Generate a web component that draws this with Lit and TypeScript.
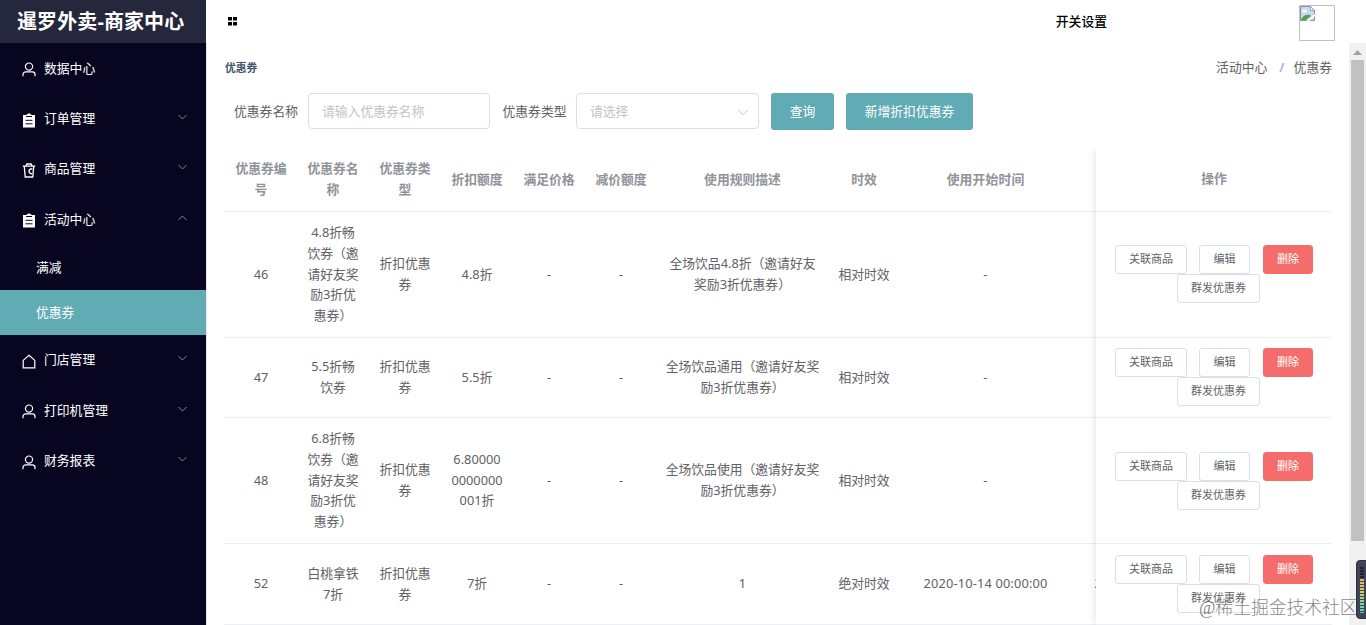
import { LitElement, html, css, svg, nothing } from "lit";
import { customElement } from "lit/decorators.js";
import { classMap } from "lit/directives/class-map.js";

const ICONS: Record<string, unknown> = {
  user: svg`<g fill="none" stroke="#fff" stroke-width="1.2"><circle cx="7" cy="4.6" r="3.6"/><path d="M1 14.2v-1.700a2.700 2.700 0 0 1 2.700-2.700h6.600a2.700 2.700 0 0 1 2.700 2.700v1.700"/></g>`,
  order: svg`<path fill="#fff" d="M1 2h3.600V1.200h1.200V.4h2.400v.8h1.200V2H13v12.400H1z"/><path stroke="#070520" stroke-width="1" d="M4 3.500h6M3.500 7.300h7M3.500 10.800h7"/>`,
  goods: svg`<g fill="none" stroke="#fff" stroke-width="1.3"><path d="M.8 3.100h12.400M4 3 4.800 1h4.400l.9 2M2.300 3.400l.9 10.600h7.600l.9-10.600"/><path d="M10.300 5.600C8 5.800 7 7 7 8.300s1 2.400 3 2.600"/></g>`,
  home: svg`<path fill="none" stroke="#fff" stroke-width="1.2" d="M7 1.200 12.800 6.400v7.500H1.200V6.400z"/>`,
};

interface Item { label: string; icon: string; arrow?: "down" | "up"; children?: { label: string; active?: boolean }[]; }

const MENU: Item[] = [
  { label: "数据中心", icon: "user" },
  { label: "订单管理", icon: "order", arrow: "down" },
  { label: "商品管理", icon: "goods", arrow: "down" },
  { label: "活动中心", icon: "order", arrow: "up", children: [{ label: "满减" }, { label: "优惠券", active: true }] },
  { label: "门店管理", icon: "home", arrow: "down" },
  { label: "打印机管理", icon: "user", arrow: "down" },
  { label: "财务报表", icon: "user", arrow: "down" },
];

const HEAD = [["优惠券编", "号"], ["优惠券名", "称"], ["优惠券类", "型"], ["折扣额度"], ["满足价格"], ["减价额度"], ["使用规则描述"], ["时效"], ["使用开始时间"], [""]];

const NONE = ["-"];
const KIND = ["折扣优惠", "券"];
const ROWS = [
  { size: "tall", cells: [["46"], ["4.8折畅", "饮券（邀", "请好友奖", "励3折优", "惠券）"], KIND, ["4.8折"], NONE, NONE, ["全场饮品4.8折（邀请好友", "奖励3折优惠券）"], ["相对时效"], NONE, []] },
  { size: "short", cells: [["47"], ["5.5折畅", "饮券"], KIND, ["5.5折"], NONE, NONE, ["全场饮品通用（邀请好友奖", "励3折优惠券）"], ["相对时效"], NONE, []] },
  { size: "tall", cells: [["48"], ["6.8折畅", "饮券（邀", "请好友奖", "励3折优", "惠券）"], KIND, ["6.80000", "0000000", "001折"], NONE, NONE, ["全场饮品使用（邀请好友奖", "励3折优惠券）"], ["相对时效"], NONE, []] },
  { size: "last", cells: [["52"], ["白桃拿铁", "7折"], KIND, ["7折"], NONE, NONE, ["1"], ["绝对时效"], ["2020-10-14 00:00:00"], ["2020-10-31 00:00:00"]] },
];

@customElement("side-menu")
class SideMenu extends LitElement {
  static styles = css`
    :host { display: block; width: 206px; height: 625px; background: #070520; color: #fff; font-size: 12.8px; }
    .brand { box-sizing: border-box; height: 43px; line-height: 43px; background: #25273d; font-size: 20px; font-weight: 700; white-space: nowrap; padding-left: 17px; letter-spacing: .1px; }
    .item { height: 50.4px; display: flex; align-items: center; padding: 0 19px 0 22px; }
    .icon { width: 14px; height: 15px; margin: 3px 8px 0 0; flex: none; }
    .label { flex: 1; margin-bottom: 2px; }
    .arrow { width: 9px; height: 6px; margin-bottom: 3px; fill: none; stroke: #85849a; }
    .up { transform: scaleY(-1); }
    .sub { height: 45px; line-height: 44px; padding-left: 36px; }
    .active { background: #60abb4; }
  `;
  render() {
    return html`<div class="brand">暹罗外卖-商家中心</div>
      ${MENU.map((m) => html`<div class="item">
          <svg class="icon" viewBox="0 0 14 15">${ICONS[m.icon]}</svg>
          <span class="label">${m.label}</span>
          ${m.arrow ? html`<svg class=${classMap({ arrow: true, up: m.arrow === "up" })} viewBox="0 0 9 6"><path d="M.5 1 4.500 5 8.500 1" /></svg>` : nothing}
        </div>
        ${m.children?.map((c) => html`<div class=${classMap({ sub: true, active: !!c.active })}>${c.label}</div>`)}`)}`;
  }
}

@customElement("coupon-table")
class CouponTable extends LitElement {
  static styles = css`
    :host { display: flex; width: 1108px; height: 477px; margin-left: -1px; line-height: 20.7px; text-align: center; white-space: nowrap; }
    .data { width: 872px; overflow: hidden; flex: none; }
    .row { display: grid; grid-template-columns: repeat(6, 72px) 171px 72px 171px 171px; width: 1076px; padding-left: 1px; }
    .row, .ops { box-sizing: border-box; border-bottom: 1px solid #ebeef5; }
    .cell { display: flex; flex-direction: column; justify-content: center; padding-bottom: 1px; }
    .cell:nth-child(n+9) { letter-spacing: .16px; }
    .head { height: 64px; color: #909399; font-weight: 700; }
    .tall { height: 126px; }
    .short { height: 80px; }
    .last { height: 81px; }
    .fixed { width: 236px; box-shadow: 0 0 9px rgba(0, 0, 0, .12); clip-path: inset(0 0 0 -10px); background: #fff; }
    .ops { display: flex; flex-direction: column; align-items: center; justify-content: center; }
    .ops:nth-child(-n+3) { padding-bottom: 2px; }
    .line { display: flex; }
    .btn { box-sizing: border-box; height: 29px; line-height: 26px; border: 1px solid #dcdfe6; border-radius: 3px; font-size: 11px; background: #fff; }
    .link { width: 72px; margin-right: 12px; }
    .edit { width: 51px; margin-right: 13px; }
    .del { width: 50px; color: #fff; background: #f56c6c; border-color: #f56c6c; }
    .send { width: 83px; margin-left: 9px; }
  `;
  cells(list: string[][]) {
    return list.map((c) => html`<div class="cell">${c.map((l) => html`<div>${l}</div>`)}</div>`);
  }
  render() {
    return html`<div class="data">
        <div class="row head">${this.cells(HEAD)}</div>
        ${ROWS.map((r) => html`<div class="row ${r.size}">${this.cells(r.cells)}</div>`)}
      </div>
      <div class="fixed">
        <div class="ops head">操作</div>
        ${ROWS.map((r) => html`<div class="ops ${r.size}">
          <div class="line"><div class="btn link">关联商品</div><div class="btn edit">编辑</div><div class="btn del">删除</div></div>
          <div class="btn send">群发优惠券</div>
        </div>`)}
      </div>`;
  }
}

@customElement("app-root")
class AppRoot extends LitElement {
  static styles = css`
    :host { display: flex; position: relative; width: 1366px; height: 625px; overflow: hidden; background: #fff; color: #606266; font: 12.8px "Noto Sans", "Noto Sans CJK SC", sans-serif; }
    .main { flex: 1; min-width: 0; display: flex; flex-direction: column; }
    .top { height: 43px; box-sizing: border-box; display: flex; align-items: center; padding: 0 31px 0 22px; color: #000; }
    .dots { width: 9px; height: 9px; margin-bottom: 1px; }
    .switch { margin-left: auto; margin-right: 192px; margin-bottom: 3px; font-weight: 500; }
    .avatar { width: 36px; height: 36px; margin-top: 2px; }
    .below { flex: 1; display: flex; min-height: 0; }
    .page { flex: 1; border-left: 1px solid #e6e6ee; padding-left: 18px; overflow: hidden; }
    .crumbs { box-sizing: border-box; height: 50px; display: flex; align-items: center; padding: 0 17px 3px 0; }
    .title { font-size: 10.8px; font-weight: 700; color: #45566a; margin: 1px auto 0 0; }
    .slash { color: #b4b8c0; margin: 0 9px 0 12px; font-weight: 700; }
    .form { height: 37px; display: flex; margin-bottom: 18px; padding-left: 9px; }
    .lab { line-height: 36px; width: 74px; }
    .lab2 { width: 73.5px; margin-left: 12.5px; }
    .input { box-sizing: border-box; width: 182px; height: 36px; line-height: 34px; border: 1px solid #dcdfe6; border-radius: 4px; padding: 0 10px 0 13px; color: #c0c4cc; display: flex; justify-content: space-between; align-items: center; }
    .select { width: 183px; }
    .caret { width: 10px; height: 7px; margin-top: 2px; fill: none; stroke: #c0c4cc; }
    .btn { width: 63px; margin-left: 12px; line-height: 36px; text-align: center; color: #fff; background: #60abb4; border-radius: 3px; }
    .wide { width: 127px; }
    .bar { width: 17px; background: #f1f1f1; display: flex; flex-direction: column; align-items: center; }
    .tri { width: 9px; height: 5px; margin: 7px 0 5px; fill: #a3a3a3; }
    .thumb { width: 13px; height: 481px; background: #c1c1c1; }
    .meter { position: absolute; left: 1356px; top: 560px; width: 16px; height: 59px; box-sizing: border-box; border-radius: 4px; background: #404354; border: 1px solid #2d3040; padding: 6px 0 0 3px; }
    .scale { width: 4px; height: 46px; background: repeating-linear-gradient(transparent 0 2px, #404354 2px 3px), linear-gradient(#1f2230 0 12px, #e5b65c 12px, #c3d66c 26px, #52d6bd 44px); }
    .mark { position: absolute; left: 1199px; top: 596px; font: 300 17.8px/24px "Liberation Serif", "Noto Sans CJK SC", serif; color: rgba(100, 100, 100, .8); white-space: nowrap; }
  `;
  render() {
    return html`<side-menu></side-menu>
      <div class="main">
        <div class="top">
          <svg class="dots" viewBox="0 0 9 9"><path d="M0 0h4v3.500H0zM5 0h4v3.500H5zM0 5h4v3.500H0zM5 5h4v3.500H5z" /></svg>
          <span class="switch">开关设置</span>
          <svg class="avatar" viewBox="0 0 36 36">
            <path fill="#fff" stroke="#c0c0c0" d="M.5.5h35v35H.5z" />
            <path fill="#c7d8f5" stroke="#8b93a0" d="M1.500 1.500h10l4 4V15.500h-14z" />
            <path fill="#fff" stroke="#8b93a0" stroke-width=".8" d="M11.500 1.500v4h4z" />
            <ellipse cx="5.500" cy="6" rx="2.500" ry="1.500" fill="#fff" />
            <path fill="#4ea83e" d="M2 15c1-4 5-6 9-5l1 1-5 4z" />
            <path stroke="#fff" stroke-width="2" d="m8 16.500 8-6.500" />
          </svg>
        </div>
        <div class="below">
          <div class="page">
            <div class="crumbs"><span class="title">优惠券</span><span>活动中心</span><span class="slash">/</span><span>优惠券</span></div>
            <div class="form">
              <span class="lab">优惠券名称</span><div class="input">请输入优惠券名称</div>
              <span class="lab lab2">优惠券类型</span>
              <div class="input select">请选择<svg class="caret" viewBox="0 0 10 7"><path d="M.5 1.200 5 5.700 9.500 1.200" /></svg></div>
              <div class="btn">查询</div><div class="btn wide">新增折扣优惠券</div>
            </div>
            <coupon-table></coupon-table>
          </div>
          <div class="bar"><svg class="tri" viewBox="0 0 9 5"><path d="M0 5 4.500 0 9 5z" /></svg><div class="thumb"></div></div>
        </div>
      </div>
      <div class="meter"><div class="scale"></div></div>
      <div class="mark">@稀土掘金技术社区</div>`;
  }
}
